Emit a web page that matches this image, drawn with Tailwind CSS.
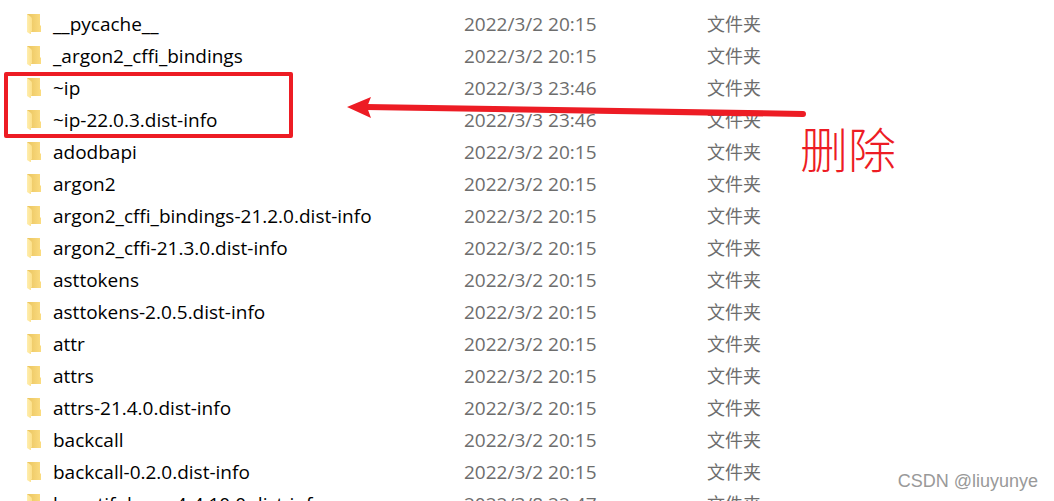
<!DOCTYPE html>
<html lang="zh-CN">
<head>
  <meta charset="UTF-8">
  <meta name="viewport" content="width=device-width, initial-scale=1.0">
  <title>site-packages</title>
  <script src="https://cdn.jsdelivr.net/npm/@tailwindcss/browser@4"></script>
</head>
<body class="bg-white font-['Open_Sans','Noto_Sans_CJK_SC',sans-serif] text-black">

  <!-- Folder icon, reused by every row -->
  <svg class="absolute size-0">
    <defs>
      <linearGradient id="folderBack" x1="0" y1="0" x2="1" y2="0">
        <stop offset="0" stop-color="#eac45f" />
        <stop offset="1" stop-color="#fbdc80" />
      </linearGradient>
      <linearGradient id="folderFront" x1="0" y1="0" x2="1" y2="0">
        <stop offset="0" stop-color="#ffeeae" />
        <stop offset="1" stop-color="#fce08a" />
      </linearGradient>
      <symbol id="folder" viewBox="0 0 14 20">
        <path d="M0 0H13V11L14 12V18H4L0 15Z" fill="url(#folderBack)" />
        <path d="M0 0L4 3Q5 4 5 5V17L4 18V20.500L0 18Z" fill="url(#folderFront)" />
      </symbol>
    </defs>
  </svg>

  <main class="relative h-screen overflow-hidden pt-2">

    <!-- File list -->
    <table class="w-full table-fixed text-left text-[19px] leading-8 whitespace-nowrap">
      <colgroup>
        <col class="w-[464px]">
        <col class="w-[243px]">
        <col>
      </colgroup>
      <tbody id="fileList" class="text-[#6d6d6d]"></tbody>
    </table>

    <!-- Marked rows -->
    <div class="absolute top-[72px] left-1 h-[66px] w-[289px] rounded-xs border-4 border-[#ed1c24]"></div>

    <!-- Arrow and note -->
    <svg class="absolute top-[94px] left-[346px] h-6 w-[462px]" viewBox="0 0 462 24">
      <path d="M20 13L457 20" stroke="#ed1c24" stroke-width="6" stroke-linecap="round" />
      <path d="M1 13L25 3L21 13L25 24Z" fill="#ed1c24" />
    </svg>
    <p class="absolute top-[115px] left-[800px] font-['Noto_Sans_CJK_SC',sans-serif] text-5xl leading-[64px] font-light text-[#ed1c24]">删除</p>

    <!-- Watermark -->
    <p class="absolute right-4 bottom-2 font-['Liberation_Sans',sans-serif] text-lg leading-6 text-[#999]">CSDN @liuyunye</p>
  </main>

  <script>
    const files = [
      ["__pycache__", "2022/3/2 20:15"],
      ["_argon2_cffi_bindings", "2022/3/2 20:15"],
      ["~ip", "2022/3/3 23:46"],
      ["~ip-22.0.3.dist-info", "2022/3/3 23:46"],
      ["adodbapi", "2022/3/2 20:15"],
      ["argon2", "2022/3/2 20:15"],
      ["argon2_cffi_bindings-21.2.0.dist-info", "2022/3/2 20:15"],
      ["argon2_cffi-21.3.0.dist-info", "2022/3/2 20:15"],
      ["asttokens", "2022/3/2 20:15"],
      ["asttokens-2.0.5.dist-info", "2022/3/2 20:15"],
      ["attr", "2022/3/2 20:15"],
      ["attrs", "2022/3/2 20:15"],
      ["attrs-21.4.0.dist-info", "2022/3/2 20:15"],
      ["backcall", "2022/3/2 20:15"],
      ["backcall-0.2.0.dist-info", "2022/3/2 20:15"],
      ["beautifulsoup4-4.10.0.dist-info", "2022/3/8 22:47"]
    ];

    document.getElementById("fileList").innerHTML = files.map(([name, date]) => `
      <tr class="h-8">
        <td class="p-0">
          <div class="flex h-8 items-center gap-3 pl-[27px] text-black">
            <svg class="h-5 w-[14px] shrink-0"><use href="#folder" /></svg>
            <span>${name}</span>
          </div>
        </td>
        <td class="p-0">${date}</td>
        <td class="p-0 text-lg leading-8">文件夹</td>
      </tr>
    `).join("");
  </script>

</body>
</html>
